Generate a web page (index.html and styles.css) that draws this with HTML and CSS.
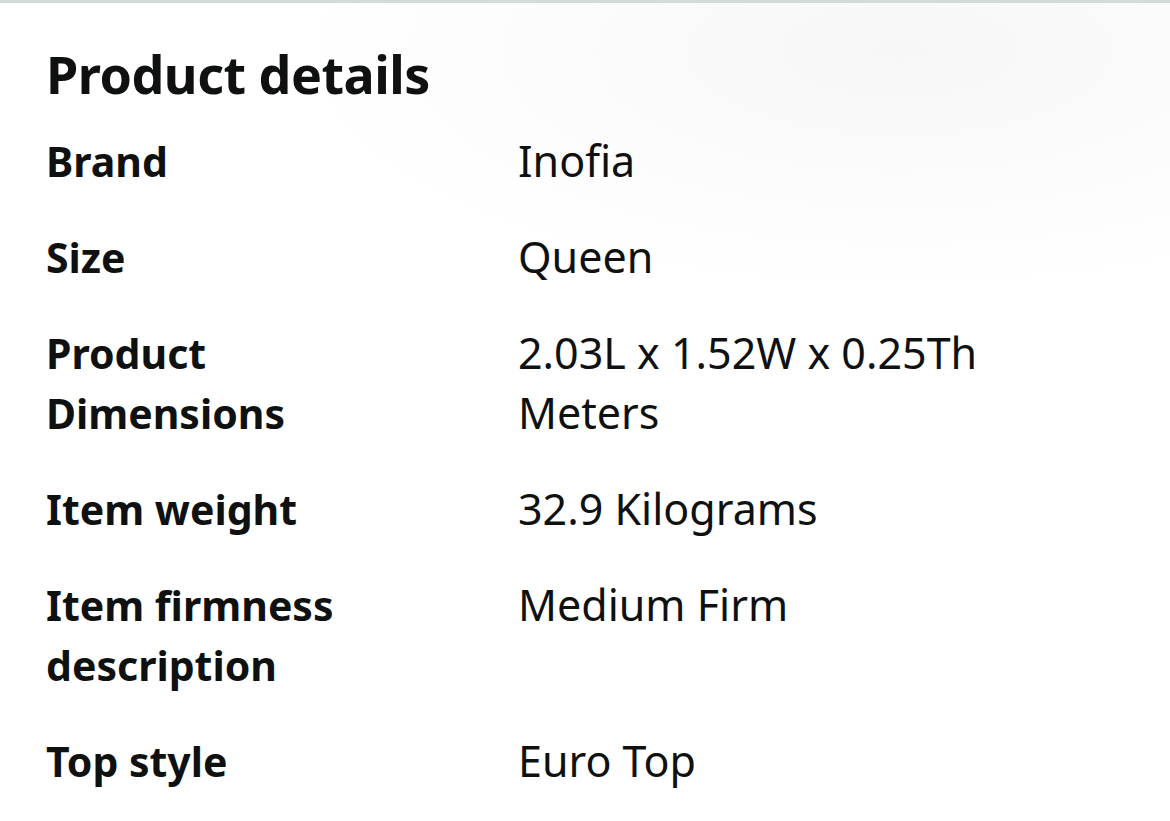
FILE: index.html
```html
<!DOCTYPE html>
<html lang="en">
<head>
  <meta charset="UTF-8" />
  <meta name="viewport" content="width=device-width, initial-scale=1.0"/>
  <title>Product details</title>
  <link rel="stylesheet" href="styles.css">
</head>
<body>
  <div class="top-rule"></div>
  <section class="details">
    <h2>Product details</h2>
    <div class="spec-table">
      <div class="spec-label">Brand</div>
      <div class="spec-value">Inofia</div>

      <div class="spec-label">Size</div>
      <div class="spec-value">Queen</div>

      <div class="spec-label">Product Dimensions</div>
      <div class="spec-value">2.03L x 1.52W x 0.25Th Meters</div>

      <div class="spec-label">Item weight</div>
      <div class="spec-value">32.9 Kilograms</div>

      <div class="spec-label">Item firmness description</div>
      <div class="spec-value">Medium Firm</div>

      <div class="spec-label">Top style</div>
      <div class="spec-value">Euro Top</div>
    </div>
  </section>
</body>
</html>
```

FILE: styles.css
```css
html, body {
  margin: 0;
  padding: 0;
  height: 100%;
  font-family: 'Noto Sans', 'Open Sans', sans-serif;
  color: #0f1111;
  background: #fff;
  overflow: hidden;
}
body {
  background:
    radial-gradient(ellipse 600px 240px at 900px 50px, rgba(246,246,246,0.9), rgba(255,255,255,0) 100%),
    #fff;
}

.top-rule {
  height: 3px;
  background-color: #d5d9d9;
}

.details {
  padding: 0 46px;
}
h2 {
  font-size: 52px;
  font-weight: 700;
  margin: 0;
  padding-top: 38px;
  line-height: 66px;
  letter-spacing: -0.5px;
}
.spec-table {
  display: grid;
  grid-template-columns: 472px 1fr;
  row-gap: 36px;
  padding-top: 24px;
  line-height: 60px;
}
.spec-label {
  font-size: 41px;
  font-weight: 700;
  padding-right: 120px;
}
.spec-value {
  font-size: 43px;
  font-weight: 400;
  padding-right: 40px;
}
```
